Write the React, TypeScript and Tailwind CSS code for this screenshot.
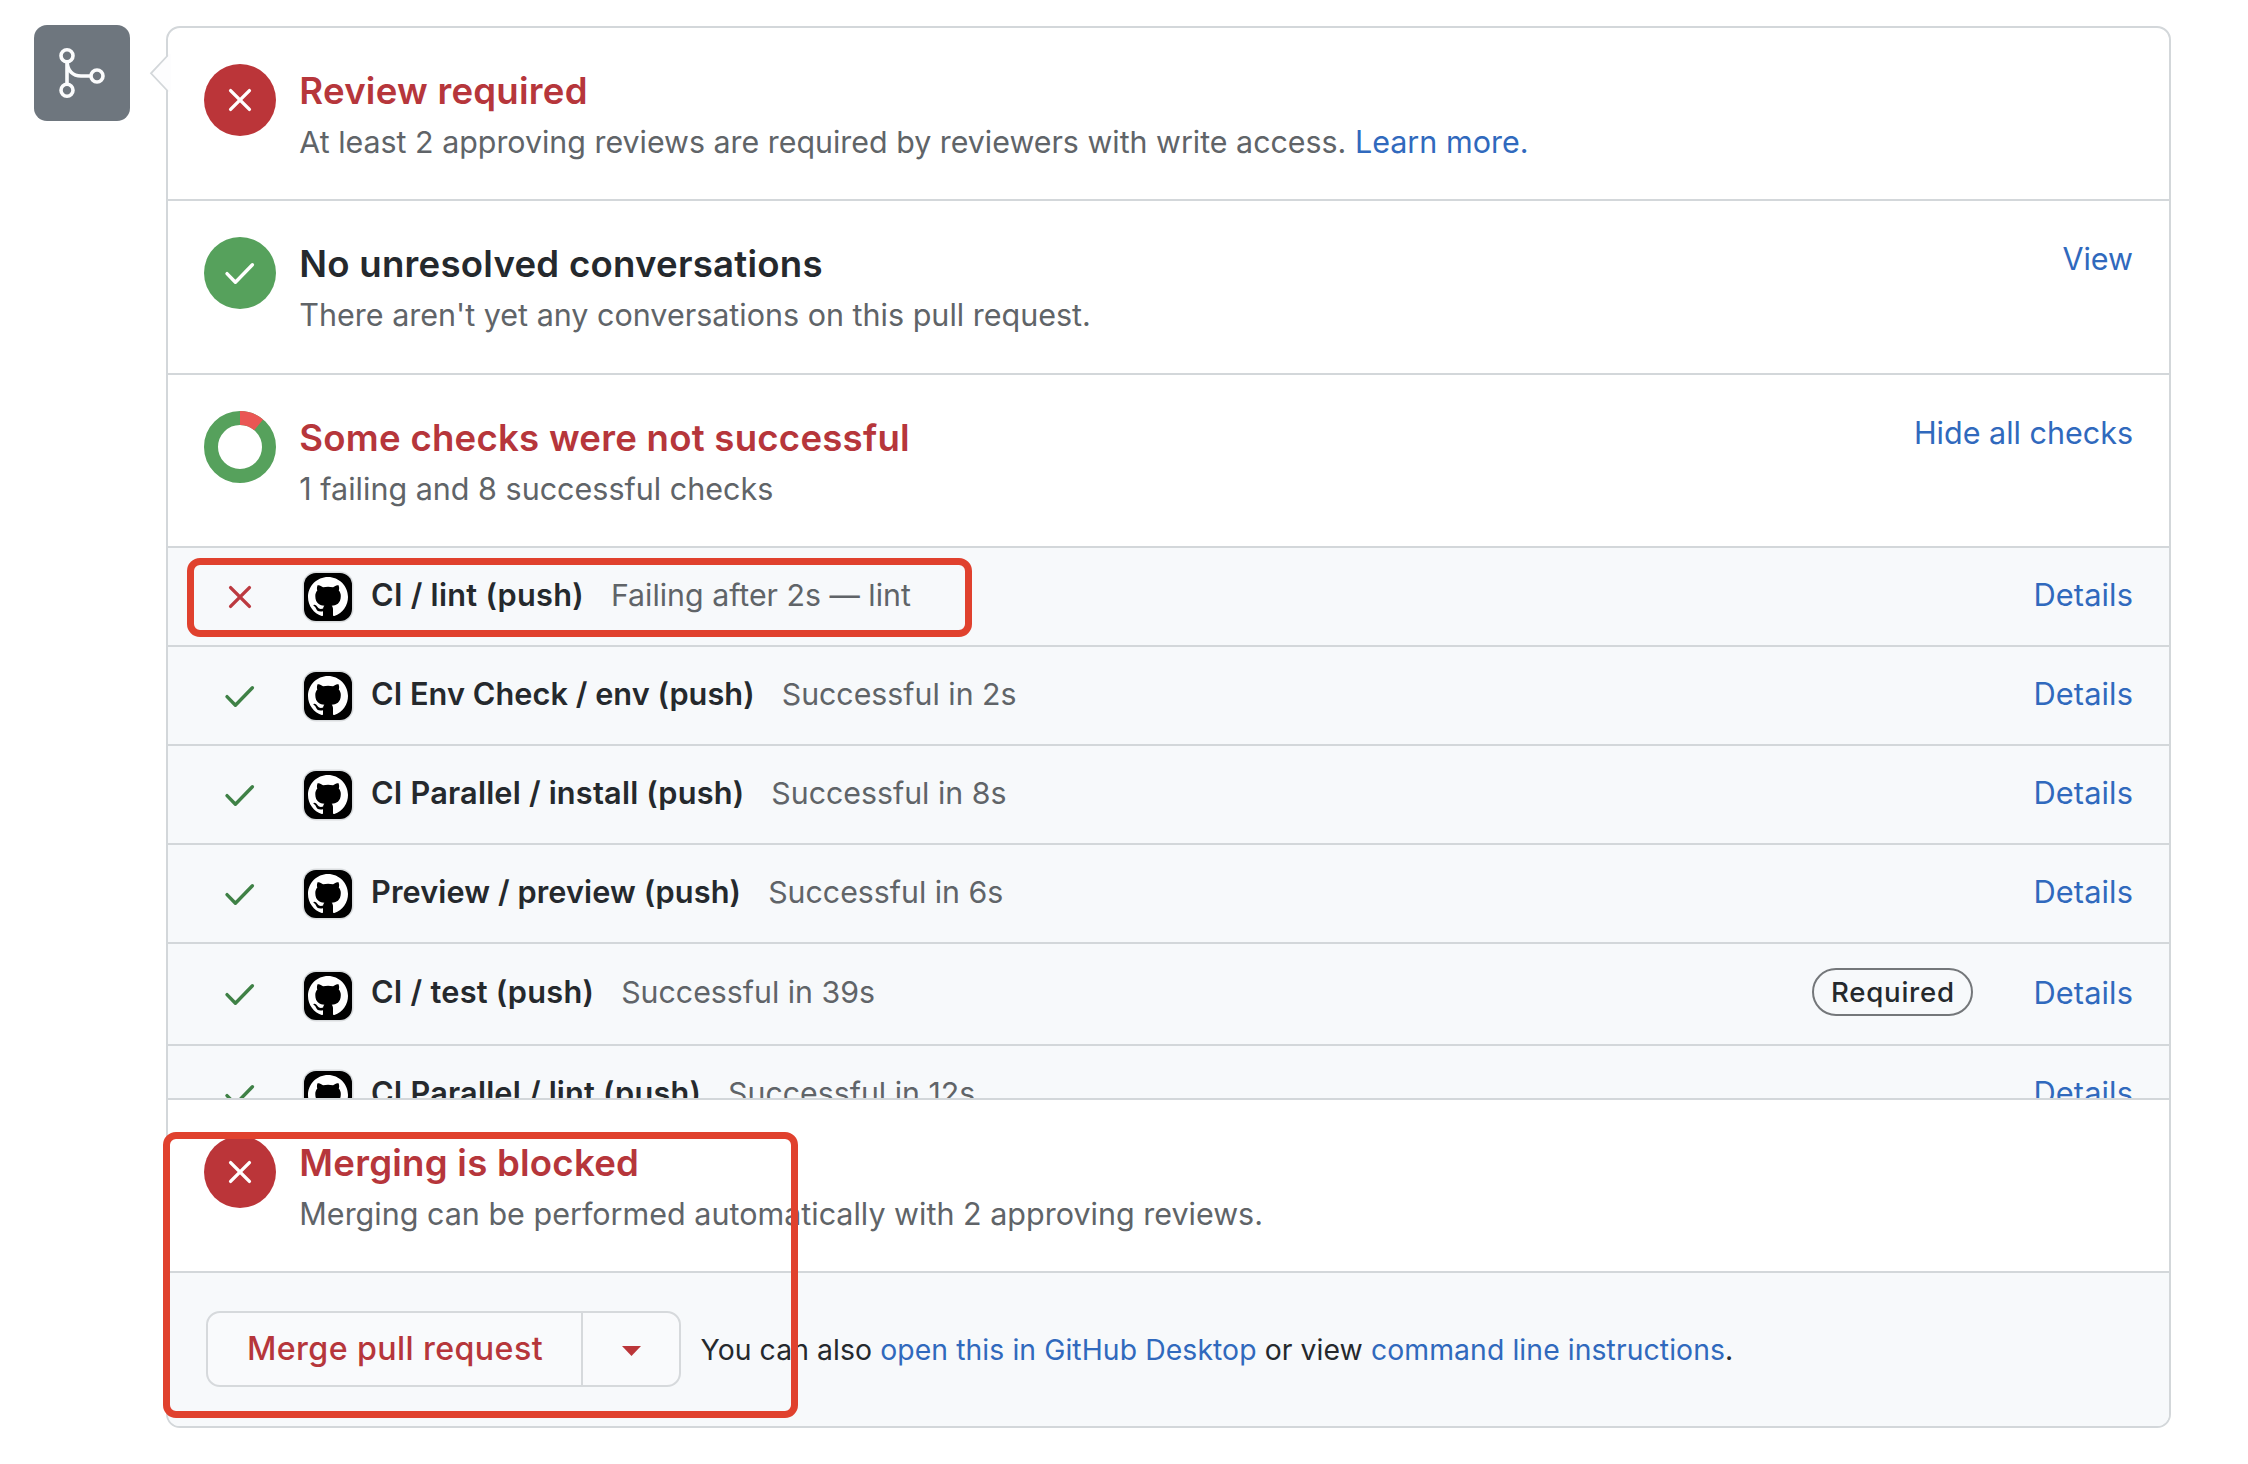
import type { ReactNode } from "react";

type Check = {
  name: string;
  detail: string;
  tracking: string;
  failing?: boolean;
  required?: boolean;
};

const checks: Check[] = [
  { name: "CI / lint (push)", detail: "Failing after 2s — lint", tracking: "tracking-[0.28px]", failing: true },
  { name: "CI Env Check / env (push)", detail: "Successful in 2s", tracking: "tracking-[0.05px]" },
  { name: "CI Parallel / install (push)", detail: "Successful in 8s", tracking: "tracking-[0.2px]" },
  { name: "Preview / preview (push)", detail: "Successful in 6s", tracking: "tracking-[0.1px]" },
  { name: "CI / test (push)", detail: "Successful in 39s", tracking: "tracking-[0.25px]", required: true },
  { name: "CI Parallel / lint (push)", detail: "Successful in 12s", tracking: "tracking-[0.2px]" },
];

const GITHUB_MARK =
  "M8 0C3.58 0 0 3.58 0 8c0 3.54 2.29 6.53 5.47 7.59.4.07.55-.17.55-.38 0-.19-.01-.82-.01-1.49-2.01.37-2.53-.49-2.69-.94-.09-.23-.48-.94-.82-1.13-.28-.15-.68-.52-.01-.53.63-.01 1.08.58 1.23.82.72 1.21 1.87.87 2.33.66.07-.52.28-.87.51-1.07-1.78-.2-3.64-.89-3.64-3.95 0-.87.31-1.59.82-2.15-.08-.2-.36-1.02.08-2.12 0 0 .67-.21 2.2.82.64-.18 1.32-.27 2-.27s1.36.09 2 .27c1.53-1.04 2.2-.82 2.2-.82.44 1.1.16 1.92.08 2.12.51.56.82 1.27.82 2.15 0 3.07-1.87 3.75-3.65 3.95.29.25.54.73.54 1.48 0 1.07-.01 1.93-.01 2.2 0 .21.15.46.55.38A8.01 8.01 0 0 0 16 8c0-4.42-3.58-8-8-8z";

function MergeIcon() {
  return (
    <svg width="96" height="96" viewBox="0 0 96 96" fill="none" stroke="#fbfcfd" strokeWidth="3.6">
      <circle cx="33" cy="30.7" r="6" />
      <circle cx="33" cy="65.3" r="6" />
      <circle cx="63" cy="51" r="6" />
      <path d="M33 36.5V59.5M33.2 37.5C33.6 45.5 38.6 51 47 51H57" />
    </svg>
  );
}

function XMark({ color }: { color: string }) {
  return (
    <svg width="72" height="72" viewBox="0 0 72 72" fill="none" stroke={color} strokeWidth="3.4" strokeLinecap="round">
      <path d="M26.6 26.6L45.4 45.4M45.4 26.6L26.6 45.4" />
    </svg>
  );
}

function CheckMark({ color }: { color: string }) {
  return (
    <svg width="72" height="72" viewBox="0 0 72 72" fill="none" stroke={color} strokeWidth="3.4" strokeLinecap="round" strokeLinejoin="round">
      <path d="M23 36.6L31.4 45.2L48.4 27.8" />
    </svg>
  );
}

function Donut() {
  return (
    <svg width="72" height="72" viewBox="0 0 72 72" fill="none" strokeWidth="14">
      <circle cx="36" cy="36" r="29" stroke="#56a15c" />
      <circle cx="36" cy="36" r="29" stroke="#ea5654" pathLength="360" strokeDasharray="40 320" transform="rotate(-90 36 36)" />
    </svg>
  );
}

function Disc({ tone, children }: { tone: string; children: ReactNode }) {
  return <div className={`size-[72px] rounded-full ${tone}`}>{children}</div>;
}

function Section({
  icon,
  title,
  titleClass,
  link,
  children,
}: {
  icon: ReactNode;
  title: string;
  titleClass: string;
  link?: string;
  children: ReactNode;
}) {
  return (
    <>
      <div className="mt-[35.5px] size-[72px] shrink-0">{icon}</div>
      <div className="ml-[23.3px] flex-1 pt-[39px]">
        <h3 className={`text-[36.6px] leading-[48px] font-semibold tracking-[0.25px] ${titleClass}`}>{title}</h3>
        <p className="mt-1.5 text-[30.5px] leading-[42px] text-[#606468]">{children}</p>
      </div>
      {link && <a className="pt-[37px] text-[30.5px] leading-[42px] text-[#3069bd]">{link}</a>}
    </>
  );
}

function CheckRow({ check, height }: { check: Check; height: string }) {
  return (
    <div className={`flex shrink-0 items-center border-b-2 border-[#d3d7da] px-9 ${height}`}>
      {check.failing ? <XMark color="#bc3a40" /> : <CheckMark color="#3f8146" />}
      <div
        className={`ml-7 flex size-12 shrink-0 items-center justify-center rounded-xl bg-black shadow-[0_0_0_1.5px_#d9dcde] ${check.required ? "mt-1" : ""}`}
      >
        <svg width="40" height="40" viewBox="0 0 16 16" fill="#fff">
          <path d={GITHUB_MARK} />
        </svg>
      </div>
      <div className="ml-[19px] flex gap-[27px] pb-1 text-[30.5px] leading-[42px] whitespace-nowrap">
        <span className={`text-[30.7px] font-semibold text-[#25292d] ${check.tracking}`}>{check.name}</span>
        <span className="text-[30.3px] text-[#606468]">{check.detail}</span>
      </div>
      <div className="flex-1" />
      {check.required && (
        <span className="mr-[60px] mb-1 flex h-12 w-[161px] items-center justify-center rounded-full border-2 border-[#74777a] pt-0.5 text-[27.6px] font-medium tracking-[0.75px] text-[#25292d]">
          Required
        </span>
      )}
      <a className={`text-[30.8px] leading-[42px] tracking-[0.1px] text-[#3069bd] ${check.required ? "pb-0.5" : "pb-1"}`}>Details</a>
    </div>
  );
}

export default function App() {
  return (
    <div className="relative flex h-[1464px] w-[2248px] items-start overflow-hidden bg-white pt-[25px] pl-[34px] font-[Inter,sans-serif] text-[#25292d]">
      <div className="size-24 shrink-0 rounded-[13px] bg-[#6e767e]">
        <MergeIcon />
      </div>

      <div className="relative mt-px ml-9 flex h-[1402px] w-[2005px] flex-col rounded-[14px] border-2 border-[#d3d7da] bg-white">
        <svg className="absolute top-[25px] -left-[19px]" width="22" height="42" viewBox="0 0 22 42">
          <path d="M22 1H18.9V2.5L2 20.3L18.9 38.5H22Z" fill="#fdfdfe" />
          <path d="M18.2 1.5V3L2 20.3L18.2 37.5V39" fill="none" stroke="#d3d7da" strokeWidth="1.8" />
        </svg>

        <section className="flex h-[173px] shrink-0 items-start border-b-2 border-[#d3d7da] px-9">
          <Section
            icon={<Disc tone="bg-[#bb3539]"><XMark color="#fff" /></Disc>}
            title="Review required"
            titleClass="text-[#b6363b]"
          >
            <span className="text-[30.38px]">At least 2 approving reviews are required by reviewers with write access. </span>
            <a className="text-[#3069bd]">Learn more.</a>
          </Section>
        </section>

        <section className="flex h-[174px] shrink-0 items-start border-b-2 border-[#d3d7da] px-9">
          <Section
            icon={<Disc tone="bg-[#56a15c]"><CheckMark color="#fff" /></Disc>}
            title="No unresolved conversations"
            titleClass="text-[#25292d]"
            link="View"
          >
            There aren't yet any conversations on this pull request.
          </Section>
        </section>

        <section className="flex h-[173px] shrink-0 items-start border-b-2 border-[#d3d7da] px-9">
          <Section
            icon={<Donut />}
            title="Some checks were not successful"
            titleClass="text-[#b6363b]"
            link="Hide all checks"
          >
            1 failing and 8 successful checks
          </Section>
        </section>

        <div className="flex h-[552px] shrink-0 flex-col overflow-hidden border-b-2 border-[#d3d7da] bg-[#f7f9fb]">
          {checks.map((check) => (
            <CheckRow key={check.name} check={check} height={check.required ? "h-[102px]" : "h-[99px]"} />
          ))}
        </div>

        <section className="flex h-[173px] shrink-0 items-start border-b-2 border-[#d3d7da] px-9">
          <Section
            icon={<Disc tone="bg-[#bb3539]"><XMark color="#fff" /></Disc>}
            title="Merging is blocked"
            titleClass="text-[#b6363b]"
          >
            Merging can be performed automatically with 2 approving reviews.
          </Section>
        </section>

        <footer className="flex flex-1 items-start rounded-b-xl bg-[#f7f9fb] pt-[38px] pl-[38px]">
          <div className="flex h-[76px] w-[475px] shrink-0 rounded-[14px] border-2 border-[#d6d9dc] bg-[#f9fafc]">
            <button className="flex w-[375px] items-center justify-center border-r-2 border-[#d6d9dc] pt-px pl-px text-[32.2px] font-medium tracking-[0.4px] text-[#b6363b]">
              Merge pull request
            </button>
            <button className="flex flex-1 items-center justify-center">
              <svg className="mt-1" width="19" height="10" viewBox="0 0 19 10" fill="#bb3539">
                <path d="M0 0H19L9.5 10Z" />
              </svg>
            </button>
          </div>
          <p className="ml-[19.5px] pt-[19px] text-[28.35px] leading-[40px] tracking-[0.08px] whitespace-nowrap">
            You can also <a className="text-[#3069bd]">open this in GitHub Desktop</a> or view{" "}
            <a className="text-[#3069bd]">command line instructions</a>.
          </p>
        </footer>
      </div>

      {/* Highlight frames drawn on top of the merge box */}
      <div className="absolute top-[558px] left-[187px] h-[79px] w-[785px] rounded-[13px] border-[7px] border-[#e0412e]" />
      <div className="absolute top-[1132px] left-[163px] h-[286px] w-[635px] rounded-[13px] border-[7px] border-[#e0412e]" />
    </div>
  );
}
